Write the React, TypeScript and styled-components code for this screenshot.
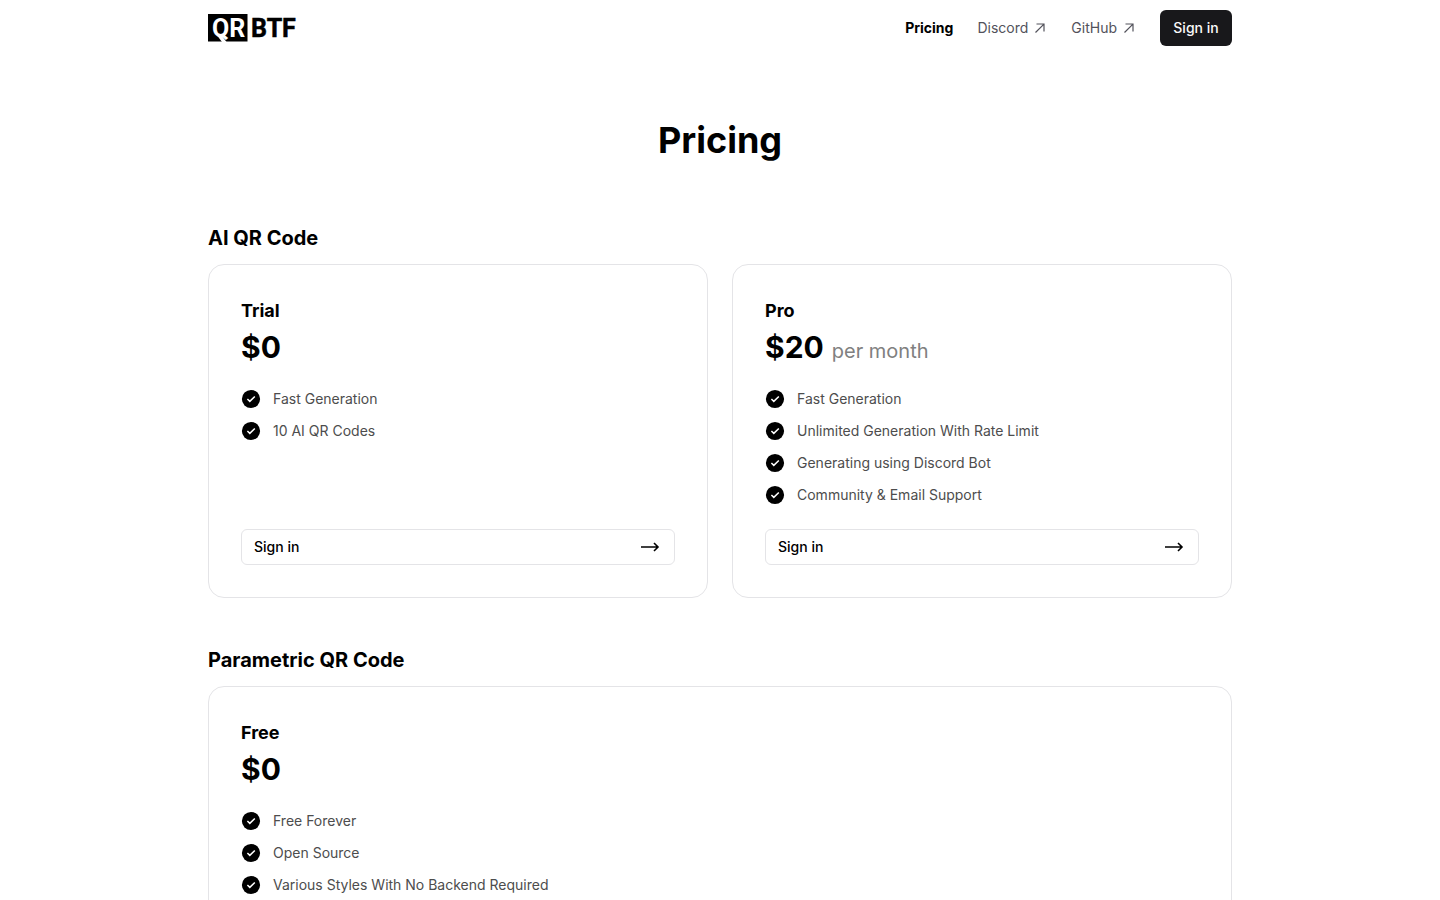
import React from "react";
import styled, { createGlobalStyle } from "styled-components";

const GlobalStyle = createGlobalStyle`
  *, *::before, *::after { box-sizing: border-box; }
  body {
    margin: 0;
    background: #fff;
    color: #000;
    font-family: Inter, "Liberation Sans", sans-serif;
    font-size: 14px;
    line-height: 20px;
  }
  h1, h2, h3, p, ul { margin: 0; padding: 0; }
`;

const Container = styled.div`
  max-width: 1072px;
  margin: 0 auto;
  padding: 0 24px;
`;

const Header = styled.header`
  display: flex;
  align-items: center;
  justify-content: space-between;
  height: 56px;
`;

const LogoLink = styled.a`
  display: flex;
  color: #000;
`;

const Nav = styled.nav`
  display: flex;
  align-items: center;
  gap: 24px;
`;

const NavLink = styled.a<{ $active?: boolean }>`
  display: flex;
  align-items: center;
  gap: 5px;
  color: ${(p) => (p.$active ? "#000" : "#52525b")};
  font-weight: ${(p) => (p.$active ? 700 : 400)};
  text-decoration: none;
`;

const PrimaryButton = styled.button`
  min-width: 72px;
  height: 36px;
  padding: 0 12px;
  border: 0;
  border-radius: 6px;
  background: #18181b;
  color: #fafafa;
  font: inherit;
  font-weight: 500;
`;

const PageTitle = styled.h1`
  padding: 64px 0;
  font-size: 36px;
  line-height: 40px;
  font-weight: 700;
  text-align: center;
`;

const Section = styled.section`
  margin-bottom: 48px;
`;

const SectionTitle = styled.h2`
  margin-bottom: 12px;
  font-size: 20px;
  line-height: 28px;
  font-weight: 700;
`;

const Cards = styled.div`
  display: grid;
  grid-auto-flow: column;
  grid-auto-columns: minmax(0, 1fr);
  gap: 24px;
`;

const Card = styled.article`
  display: flex;
  flex-direction: column;
  padding: 32px;
  border: 1px solid #e4e4e7;
  border-radius: 16px;
`;

const PlanName = styled.h3`
  font-size: 18px;
  line-height: 28px;
  font-weight: 700;
`;

const Price = styled.p`
  display: flex;
  align-items: baseline;
  gap: 8px;
  margin-top: 4px;
  font-size: 30px;
  line-height: 36px;
  font-weight: 700;
`;

const Period = styled.span`
  color: #808080;
  font-size: 20px;
  line-height: 28px;
  font-weight: 400;
`;

const Features = styled.ul`
  display: grid;
  gap: 12px;
  margin: 24px 0;
  list-style: none;
`;

const Feature = styled.li`
  display: flex;
  align-items: center;
  gap: 12px;
  color: #4d4d4d;
`;

const OutlineButton = styled.button`
  display: flex;
  align-items: center;
  justify-content: space-between;
  height: 36px;
  margin-top: auto;
  padding: 0 12px;
  border: 1px solid #e4e4e7;
  border-radius: 6px;
  background: #fff;
  color: #000;
  font: inherit;
  font-weight: 500;
`;

const LogoMark = styled.svg`
  display: block;
  overflow: visible;
`;

const LogoText = styled.text`
  font-family: Roboto, "Liberation Sans", sans-serif;
  font-size: 25px;
  font-weight: 700;
`;

function Logo() {
  return (
    <LogoMark width="88" height="28" viewBox="0 0 88 28" role="img" aria-label="QRBTF">
      <path d="M0 0h39.5v27.5H0z" fill="#000" />
      <path d="M9.5 22h4.5l4.5 6h-4.5z" fill="#fff" />
      <LogoText x="4" y="23" fill="#fff">QR</LogoText>
      <LogoText x="43" y="23" fill="#000" stroke="#000" strokeWidth="0.5">BTF</LogoText>
    </LogoMark>
  );
}

function ArrowUpRight() {
  return (
    <svg width="14" height="14" viewBox="0 0 14 14" fill="none" stroke="currentColor" strokeWidth="1.2" aria-hidden="true">
      <path d="M2.5 11.5l8.2-8.2M3.5 3h7.5v7.5" />
    </svg>
  );
}

function ArrowRight() {
  return (
    <svg width="24" height="24" viewBox="0 0 24 24" fill="none" stroke="currentColor" strokeWidth="1.6" aria-hidden="true">
      <path d="M3 12h17M16 8l4 4-4 4" />
    </svg>
  );
}

function Check() {
  return (
    <svg width="20" height="20" viewBox="0 0 20 20" fill="none" aria-hidden="true">
      <circle cx="10" cy="10" r="9.1" fill="#000" />
      <path d="M6.4 10l2.4 2.4 5-4.9" stroke="#fff" strokeWidth="1.5" />
    </svg>
  );
}

interface PlanProps {
  name: string;
  price: string;
  period?: string;
  features: string[];
  action?: string;
}

function Plan({ name, price, period, features, action }: PlanProps) {
  return (
    <Card>
      <PlanName>{name}</PlanName>
      <Price>
        {price}
        {period && <Period>{period}</Period>}
      </Price>
      <Features>
        {features.map((text) => (
          <Feature key={text}>
            <Check />
            {text}
          </Feature>
        ))}
      </Features>
      {action && (
        <OutlineButton type="button">
          {action}
          <ArrowRight />
        </OutlineButton>
      )}
    </Card>
  );
}

export default function App() {
  return (
    <>
      <GlobalStyle />
      <Container>
        <Header>
          <LogoLink href="#"><Logo /></LogoLink>
          <Nav>
            <NavLink href="#pricing" $active>Pricing</NavLink>
            <NavLink href="#discord">Discord<ArrowUpRight /></NavLink>
            <NavLink href="#github">GitHub<ArrowUpRight /></NavLink>
            <PrimaryButton type="button">Sign in</PrimaryButton>
          </Nav>
        </Header>
        <main>
          <PageTitle>Pricing</PageTitle>
          <Section>
            <SectionTitle>AI QR Code</SectionTitle>
            <Cards>
              <Plan name="Trial" price="$0" features={["Fast Generation", "10 AI QR Codes"]} action="Sign in" />
              <Plan
                name="Pro"
                price="$20"
                period="per month"
                features={[
                  "Fast Generation",
                  "Unlimited Generation With Rate Limit",
                  "Generating using Discord Bot",
                  "Community & Email Support",
                ]}
                action="Sign in"
              />
            </Cards>
          </Section>
          <Section>
            <SectionTitle>Parametric QR Code</SectionTitle>
            <Cards>
              <Plan
                name="Free"
                price="$0"
                features={["Free Forever", "Open Source", "Various Styles With No Backend Required"]}
              />
            </Cards>
          </Section>
        </main>
      </Container>
    </>
  );
}
